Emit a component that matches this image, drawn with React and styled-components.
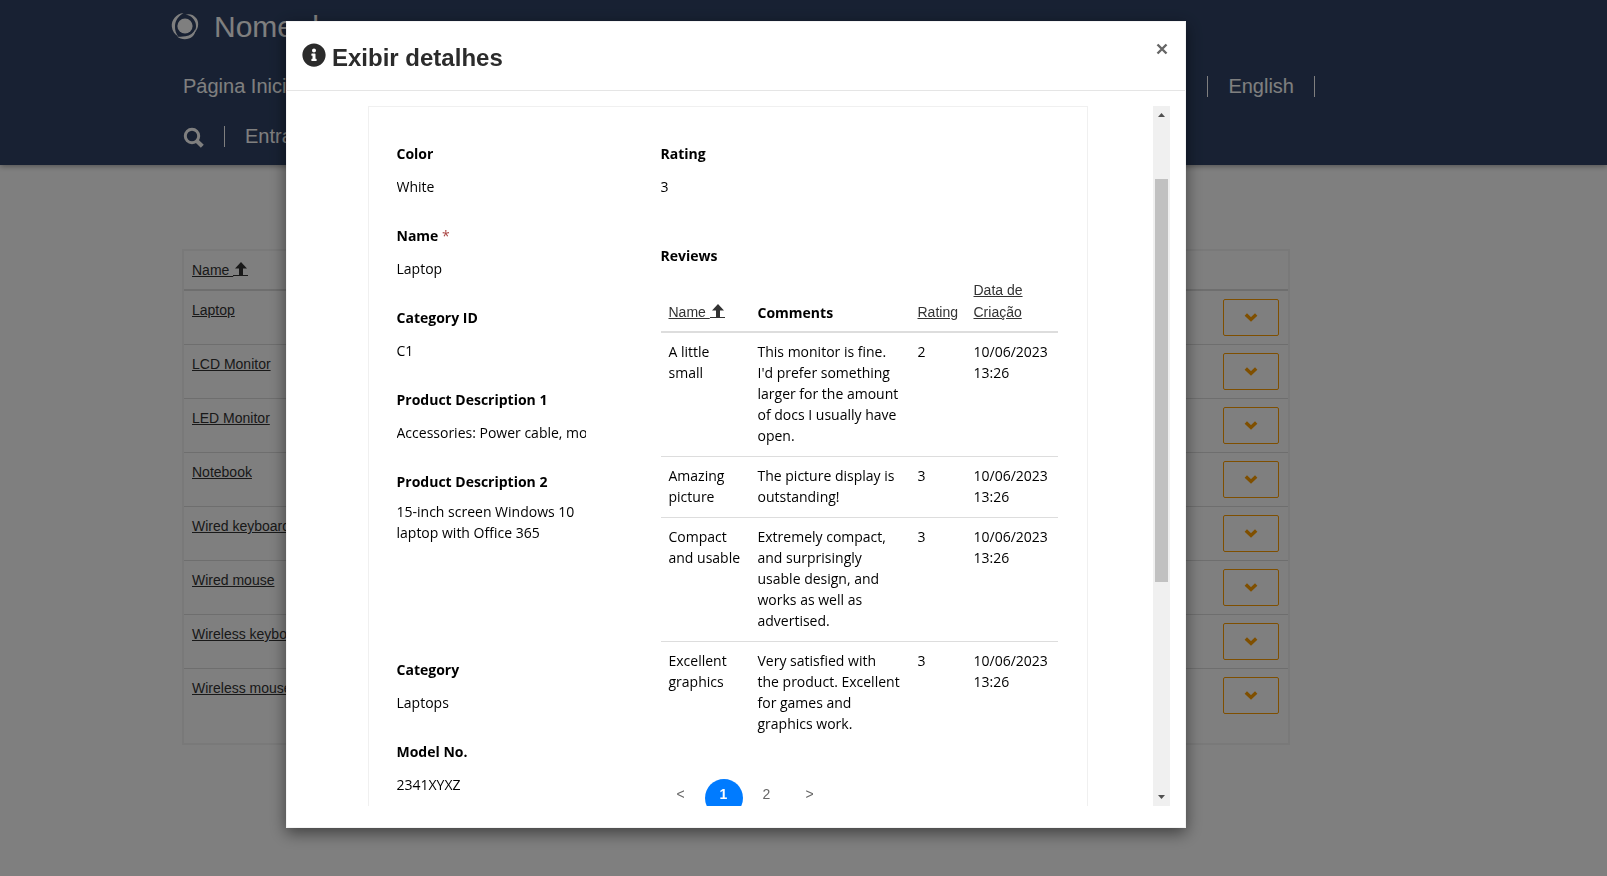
import React from 'react';
import styled, { createGlobalStyle } from 'styled-components';
import { FaInfoCircle } from 'react-icons/fa';

const products = [
    'Laptop',
    'LCD Monitor',
    'LED Monitor',
    'Notebook',
    'Wired keyboard',
    'Wired mouse',
    'Wireless keyboard',
    'Wireless mouse'
];

const reviews = [
    { name: 'A little small', comments: "This monitor is fine. I'd prefer something larger for the amount of docs I usually have open.", rating: 2 },
    { name: 'Amazing picture', comments: 'The picture display is outstanding!', rating: 3 },
    { name: 'Compact and usable', comments: 'Extremely compact, and surprisingly usable design, and works as well as advertised.', rating: 3 },
    { name: 'Excellent graphics', comments: 'Very satisfied with the\u00a0product. Excellent for games and graphics work.', rating: 3 }
];

const Logo = () => (
    <svg width="28" height="28" viewBox="0 0 28 28" fill="#fff" aria-hidden="true">
        <circle cx="14" cy="14" r="7.600" />
        <path d="M12.500 1C5 2 .3 8 .8 14.500c.4 4.500 3 8 6.500 10C5 21.500 3.800 18 4 14 4.200 8.500 7.500 4 12.500 1z" />
        <path d="M14.500 2.800c5 .4 8.500 3.700 10 8 1 3.500.5 7-1.500 10.500 4.500-4.500 5.500-10.500 2.300-15C23 3 18.500 1.200 14.500 2.800z" />
        <path d="M6 24.500c4.500 3.800 11.500 3.500 15.500 0 2.300-2.200 3.200-5 3-7.800-2 4.500-5.500 7-10 7.600-3 .5-5.500.6-8.500.2z" />
    </svg>
);

const SearchIcon = () => (
    <svg width="21" height="22" viewBox="0 0 21 22" fill="none" stroke="#fff" aria-hidden="true">
        <circle cx="9" cy="10" r="6.700" strokeWidth="3" />
        <path d="M13.600 14.800l5.700 5.500" strokeWidth="4.200" />
    </svg>
);

// arrow carries its own piece of the link underline
const SortArrow = () => (
    <SortSvg width="15" height="18" viewBox="0 0 15 18" aria-hidden="true">
        <path d="M8 2l6 6.500h-4V16H6V8.500H2z" />
        <path d="M0 15h15v1H0z" />
    </SortSvg>
);

const ChevronDown = () => (
    <svg width="14" height="10" viewBox="0 0 14 10" fill="none" stroke="currentColor" strokeWidth="3.400" aria-hidden="true">
        <path d="M1.800 1.500L7 6.500l5.200-5" />
    </svg>
);

const Field = ({ id, label, value, required, multiline }) => (
    <FieldWrapper>
        <Label htmlFor={id}>{label}{required && <Required> *</Required>}</Label>
        {multiline
            ? <TextArea id={id} readOnly defaultValue={value} />
            : <TextInput id={id} type="text" readOnly defaultValue={value} />
        }
    </FieldWrapper>
);

const App = () => (
    <>
        <GlobalStyle />
        <Page>
            <Header>
                <Container>
                    <Brand><Logo /><span>Nome da empresa</span></Brand>
                    <Nav>
                        <NavLink href="#home">Página Inicial</NavLink>
                        <NavGroup>
                            <Divider />
                            <NavLink href="#en">English</NavLink>
                            <Divider />
                        </NavGroup>
                    </Nav>
                    <Nav>
                        <NavGroup>
                            <IconButton type="button" aria-label="Pesquisar"><SearchIcon /></IconButton>
                            <Divider />
                            <NavLink href="#login">Entrar</NavLink>
                        </NavGroup>
                    </Nav>
                </Container>
            </Header>
            <Container>
                <ListPanel>
                    <ListTable>
                        <thead>
                            <tr>
                                <th><SortLink href="#name">Name <SortArrow /></SortLink></th>
                                <th />
                            </tr>
                        </thead>
                        <tbody>
                            {products.map((product) => (
                                <tr key={product}>
                                    <td><SortLink href="#details">{product}</SortLink></td>
                                    <td>
                                        <ActionButton type="button" aria-label={`Ações ${product}`}><ChevronDown /></ActionButton>
                                    </td>
                                </tr>
                            ))}
                        </tbody>
                    </ListTable>
                </ListPanel>
            </Container>
        </Page>
        <Overlay>
            <Modal role="dialog" aria-labelledby="modal-title">
                <ModalHeader>
                    <ModalTitle id="modal-title"><FaInfoCircle size={24} /><span>Exibir detalhes</span></ModalTitle>
                    <CloseButton type="button" aria-label="Fechar">
                        <svg width="12" height="12" viewBox="0 0 12 12" stroke="#666" strokeWidth="2.400" aria-hidden="true">
                            <path d="M1.500 1.500l9 9M10.500 1.500l-9 9" />
                        </svg>
                    </CloseButton>
                </ModalHeader>
                <ModalBody>
                    <Viewport>
                        <Form>
                            <Column>
                                <Field id="color" label="Color" value="White" />
                                <Field id="name" label="Name" value="Laptop" required />
                                <Field id="category-id" label="Category ID" value="C1" />
                                <Field id="description-1" label="Product Description 1" value="Accessories: Power cable, mouse" />
                                <Field id="description-2" label="Product Description 2" value="15-inch screen Windows 10 laptop with Office 365" multiline />
                                <Field id="category" label="Category" value="Laptops" />
                                <Field id="model" label="Model No." value="2341XYXZ" />
                            </Column>
                            <Column>
                                <Field id="rating" label="Rating" value="3" />
                                <Reviews>
                                    <Subtitle>Reviews</Subtitle>
                                    <ReviewTable>
                                        <colgroup>
                                            <col width="89" />
                                            <col width="160" />
                                            <col width="56" />
                                            <col width="92" />
                                        </colgroup>
                                        <thead>
                                            <tr>
                                                <th><SortLink href="#r-name">Name <SortArrow /></SortLink></th>
                                                <th>Comments</th>
                                                <th><SortLink href="#r-rating">Rating</SortLink></th>
                                                <th><SortLink href="#r-date">Data de Criação</SortLink></th>
                                            </tr>
                                        </thead>
                                        <tbody>
                                            {reviews.map((review) => (
                                                <tr key={review.name}>
                                                    <td>{review.name}</td>
                                                    <td>{review.comments}</td>
                                                    <td>{review.rating}</td>
                                                    <td>10/06/2023 13:26</td>
                                                </tr>
                                            ))}
                                        </tbody>
                                    </ReviewTable>
                                    <Pagination>
                                        <PageLink href="#prev">&lt;</PageLink>
                                        <PageLink href="#1" $active>1</PageLink>
                                        <PageLink href="#2">2</PageLink>
                                        <PageLink href="#next">&gt;</PageLink>
                                    </Pagination>
                                </Reviews>
                            </Column>
                        </Form>
                    </Viewport>
                    <Scrollbar aria-hidden="true">
                        <svg width="17" height="17" viewBox="0 0 17 17" fill="#505050"><path d="M5 11h7L8.500 7z" /></svg>
                        <Track><Thumb /></Track>
                        <svg width="17" height="17" viewBox="0 0 17 17" fill="#505050"><path d="M5 6h7l-3.500 4z" /></svg>
                    </Scrollbar>
                </ModalBody>
            </Modal>
        </Overlay>
    </>
);

const GlobalStyle = createGlobalStyle`
    *, *::before, *::after {
        box-sizing: border-box;
    }
    body {
        margin: 0;
        overflow: hidden;
        background: #fff;
        font-family: 'Liberation Sans', Arial, sans-serif;
        font-size: 14px;
        line-height: 21px;
        color: #333;
    }
`;

const Page = styled.div`
    min-height: 100vh;
`;

const Header = styled.header`
    height: 165px;
    background: #304366;
    box-shadow: 0 1px 6px rgba(0, 0, 0, 0.4);
    color: #fff;
`;

/* the right gutter keeps page and dialog on the same centre line */
const Container = styled.div`
    width: calc(100% - 135px);
    max-width: 1170px;
    margin-left: max(0px, calc((100% - 135px - 1170px) / 2));
    padding: 0 6px 0 20px;
`;

const Brand = styled.div`
    display: flex;
    align-items: center;
    gap: 15px;
    height: 52px;
    font-size: 30px;
    line-height: 34px;
    span {
        padding-top: 1px;
    }
`;

const Nav = styled.nav`
    display: flex;
    align-items: center;
    justify-content: space-between;
    height: 50px;
    padding-top: 18px;
    padding-left: 12px;
    font-size: 20px;
    line-height: 24px;
`;

const NavGroup = styled.div`
    display: flex;
    align-items: center;
    gap: 20px;
`;

const NavLink = styled.a`
    color: #fff;
    text-decoration: none;
`;

const Divider = styled.span`
    width: 1px;
    height: 21px;
    background: #fff;
`;

const IconButton = styled.button`
    display: flex;
    padding: 2px 0 0;
    border: 0;
    background: none;
`;

const ListPanel = styled.section`
    margin: 84px 25px 0 11px;
    padding-bottom: 20px;
    border: 2px solid #f2f2f2;
`;

const SortSvg = styled.svg`
    vertical-align: -3px;
    fill: currentColor;
`;

const SortLink = styled.a`
    font-family: 'Liberation Sans', Arial, sans-serif;
    font-weight: 400;
    color: #333;
`;

const ListTable = styled.table`
    width: 100%;
    border-collapse: separate;
    border-spacing: 0;
    th, td {
        padding: 8px;
        text-align: left;
        vertical-align: top;
    }
    th:first-child, td:first-child {
        padding-top: 9px;
    }
    th {
        height: 40px;
        border-bottom: 2px solid #ddd;
    }
    th:first-child {
        padding-bottom: 7px;
    }
    td {
        height: 54px;
        border-bottom: 1px solid #ddd;
    }
    td:last-child {
        width: 73px;
    }
    tr:last-child td {
        border-bottom: 0;
    }
`;

const ActionButton = styled.button`
    display: flex;
    align-items: center;
    justify-content: center;
    width: 56px;
    height: 37px;
    border: 1px solid #ff9f00;
    border-radius: 2px;
    background: none;
    color: #ff9f00;
`;

const Overlay = styled.div`
    position: fixed;
    inset: 0;
    padding: 21px 135px 48px 0;
    background: rgba(0, 0, 0, 0.5);
`;

const Modal = styled.div`
    display: flex;
    flex-direction: column;
    width: 100%;
    max-width: 900px;
    height: 100%;
    margin: 0 auto;
    background: #fff;
    border: 1px solid #f4f4f4;
    box-shadow: 0 5px 15px rgba(0, 0, 0, 0.5);
`;

const ModalHeader = styled.div`
    display: flex;
    justify-content: space-between;
    height: 69px;
    padding: 15px 17px 0 15px;
    border-bottom: 1px solid #e5e5e5;
`;

const ModalTitle = styled.h1`
    display: flex;
    gap: 6px;
    margin: 0;
    padding-top: 6px;
    font-size: 24px;
    line-height: 30px;
    color: #2b2b2b;
`;

const CloseButton = styled.button`
    align-self: flex-start;
    display: flex;
    padding: 6px 0 0;
    border: 0;
    background: none;
`;

const ModalBody = styled.div`
    display: flex;
    flex: 1;
    min-height: 0;
    padding: 15px 15px 21px;
`;

const Viewport = styled.div`
    flex: 1;
    overflow: hidden;
`;

const Form = styled.form`
    display: grid;
    grid-template-columns: 189px 397px;
    gap: 75px;
    max-width: 720px;
    margin: 0 auto;
    padding: 36px 28px;
    border: 1px solid #f0f0f0;
    font-family: 'Open Sans', sans-serif;
    color: #000;
`;

const Column = styled.div`
    display: flex;
    flex-direction: column;
`;

const FieldWrapper = styled.div`
    display: flex;
    flex-direction: column;
    gap: 5px;
    margin-bottom: 22px;
`;

const Label = styled.label`
    font-weight: 700;
`;

const Required = styled.span`
    font-weight: 400;
    color: #a94442;
`;

const TextInput = styled.input`
    width: 100%;
    height: 34px;
    padding: 0;
    border: 0;
    background: none;
    outline: 0;
    font: inherit;
    color: inherit;
`;

const TextArea = styled.textarea`
    width: 100%;
    height: 140px;
    padding: 4px 0 0;
    border: 0;
    background: none;
    outline: 0;
    resize: none;
    font: inherit;
    color: inherit;
`;

const Reviews = styled.section`
    padding-top: 20px;
`;

const Subtitle = styled.h2`
    margin: 0 0 5px;
    font-size: 14px;
    line-height: 21px;
    font-weight: 700;
`;

const ReviewTable = styled.table`
    width: 100%;
    table-layout: fixed;
    border-collapse: separate;
    border-spacing: 0;
    th, td {
        padding: 8px;
        text-align: left;
        vertical-align: top;
    }
    th {
        font-weight: 700;
        vertical-align: bottom;
        border-bottom: 2px solid #ddd;
    }
    td {
        padding-bottom: 10px;
        border-bottom: 1px solid #ddd;
    }
    tr:last-child td {
        border-bottom: 0;
    }
`;

const Pagination = styled.nav`
    display: flex;
    gap: 5px;
    margin-top: 35px;
    padding-left: 1px;
`;

const PageLink = styled.a`
    display: flex;
    justify-content: center;
    width: 38px;
    height: 38px;
    padding-top: 5px;
    border-radius: 50%;
    font-family: 'Liberation Sans', Arial, sans-serif;
    text-decoration: none;
    font-weight: ${(props) => (props.$active ? 700 : 400)};
    color: ${(props) => (props.$active ? '#fff' : '#666')};
    background: ${(props) => (props.$active ? '#007bff' : 'none')};
`;

const Scrollbar = styled.div`
    display: flex;
    flex-direction: column;
    width: 17px;
    background: #f0f0f0;
`;

const Track = styled.div`
    flex: 1;
    padding: 56px 2px 0;
`;

const Thumb = styled.div`
    height: 66%;
    background: #c1c1c1;
`;

export default App;
